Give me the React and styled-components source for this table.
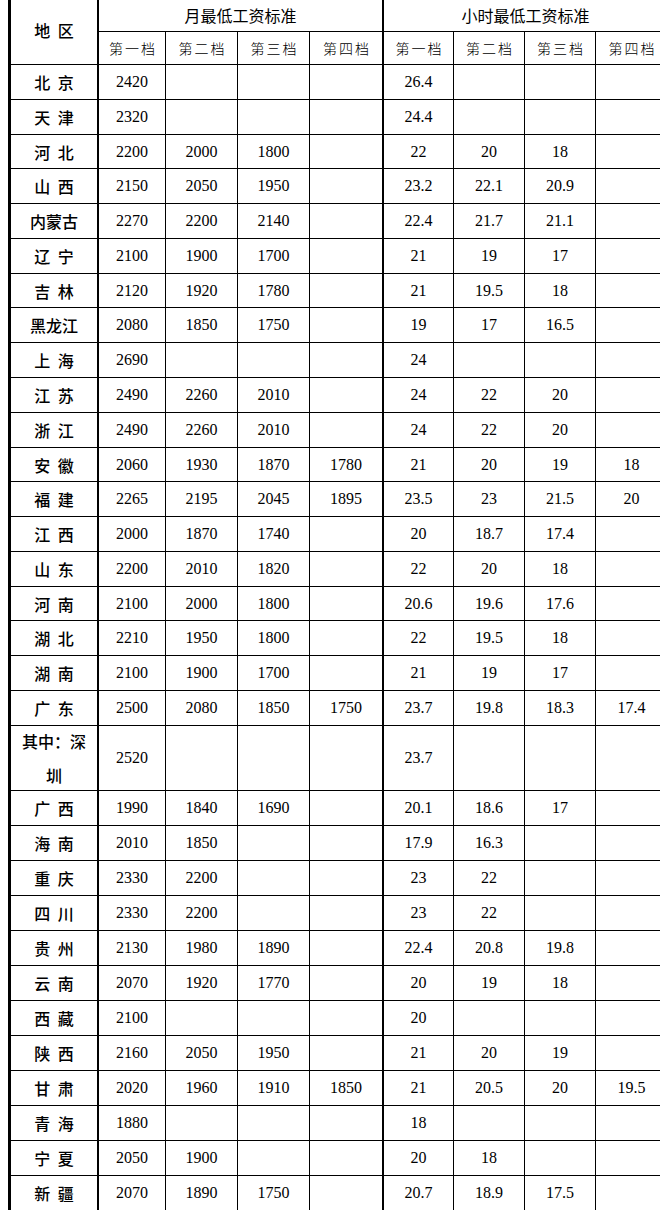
import React from 'react'
import styled, { createGlobalStyle } from 'styled-components'

const GlobalStyle = createGlobalStyle`
  html, body {
    margin: 0;
    padding: 0;
    background: #ffffff;
    overflow: hidden;
  }
  body {
    font-family: "Noto Sans CJK SC", "Noto Sans", sans-serif;
    color: #000;
  }
`

const Page = styled.div`
  width: 660px;
  height: 1210px;
  overflow: hidden;
  background: #fff;
`

const Sheet = styled.div`
  display: grid;
  grid-template-columns: 88px 67px 72px 72px 74px 70px 71px 71px 72px;
  margin-left: 8px;
  width: max-content;
  border-left: 3px solid #000;
`

const Cell = styled.div`
  box-sizing: border-box;
  display: flex;
  align-items: center;
  justify-content: center;
  text-align: center;
  border-right: ${(p) => (p.$thick ? '2px' : '1px')} solid #000;
  border-bottom: 1px solid #000;
  grid-column: ${(p) => p.$span || 'auto'};
  grid-row: ${(p) => p.$rows || 'auto'};
  white-space: pre;
`

const AreaCell = styled(Cell)`
  font-family: "Noto Sans CJK SC", sans-serif;
  font-size: 16px;
  font-weight: 500;
  line-height: 34px;
  word-spacing: 4px;
  flex-direction: column;
`

const GroupCell = styled(Cell)`
  font-family: "Noto Sans CJK SC", sans-serif;
  font-size: 16px;
  padding-bottom: 2px;
`

const TierCell = styled(Cell)`
  font-family: "Noto Sans CJK SC", sans-serif;
  font-size: 14px;
  font-weight: 300;
  letter-spacing: 2px;
  padding-left: 2px;
`

const NumCell = styled(Cell)`
  font-family: "Liberation Serif", "Times New Roman", serif;
  font-size: 16px;
`

const HeadLabel = styled.span`
  padding-bottom: 4px;
`

const tiers = ['第一档', '第二档', '第三档', '第四档']

const rows = [
  ['北 京', '2420', '', '', '', '26.4', '', '', ''],
  ['天 津', '2320', '', '', '', '24.4', '', '', ''],
  ['河 北', '2200', '2000', '1800', '', '22', '20', '18', ''],
  ['山 西', '2150', '2050', '1950', '', '23.2', '22.1', '20.9', ''],
  ['内蒙古', '2270', '2200', '2140', '', '22.4', '21.7', '21.1', ''],
  ['辽 宁', '2100', '1900', '1700', '', '21', '19', '17', ''],
  ['吉 林', '2120', '1920', '1780', '', '21', '19.5', '18', ''],
  ['黑龙江', '2080', '1850', '1750', '', '19', '17', '16.5', ''],
  ['上 海', '2690', '', '', '', '24', '', '', ''],
  ['江 苏', '2490', '2260', '2010', '', '24', '22', '20', ''],
  ['浙 江', '2490', '2260', '2010', '', '24', '22', '20', ''],
  ['安 徽', '2060', '1930', '1870', '1780', '21', '20', '19', '18'],
  ['福 建', '2265', '2195', '2045', '1895', '23.5', '23', '21.5', '20'],
  ['江 西', '2000', '1870', '1740', '', '20', '18.7', '17.4', ''],
  ['山 东', '2200', '2010', '1820', '', '22', '20', '18', ''],
  ['河 南', '2100', '2000', '1800', '', '20.6', '19.6', '17.6', ''],
  ['湖 北', '2210', '1950', '1800', '', '22', '19.5', '18', ''],
  ['湖 南', '2100', '1900', '1700', '', '21', '19', '17', ''],
  ['广 东', '2500', '2080', '1850', '1750', '23.7', '19.8', '18.3', '17.4'],
  [['其中：深', '圳'], '2520', '', '', '', '23.7', '', '', ''],
  ['广 西', '1990', '1840', '1690', '', '20.1', '18.6', '17', ''],
  ['海 南', '2010', '1850', '', '', '17.9', '16.3', '', ''],
  ['重 庆', '2330', '2200', '', '', '23', '22', '', ''],
  ['四 川', '2330', '2200', '', '', '23', '22', '', ''],
  ['贵 州', '2130', '1980', '1890', '', '22.4', '20.8', '19.8', ''],
  ['云 南', '2070', '1920', '1770', '', '20', '19', '18', ''],
  ['西 藏', '2100', '', '', '', '20', '', '', ''],
  ['陕 西', '2160', '2050', '1950', '', '21', '20', '19', ''],
  ['甘 肃', '2020', '1960', '1910', '1850', '21', '20.5', '20', '19.5'],
  ['青 海', '1880', '', '', '', '18', '', '', ''],
  ['宁 夏', '2050', '1900', '', '', '20', '18', '', ''],
  ['新 疆', '2070', '1890', '1750', '', '20.7', '18.9', '17.5', ''],
]

// row heights follow the grid lines of the scan
const rowHeights = (() => {
  const hs = [32, 33]
  let prev = 64
  rows.forEach((r, i) => {
    let line
    if (i < 18) line = Math.round(64 + 34.78 * (i + 1))
    else if (i === 18) line = 725
    else if (i === 19) line = 790
    else line = prev + 35
    hs.push(line - prev)
    prev = line
  })
  return hs.map((h) => h + 'px').join(' ')
})()

export default function App() {
  return (
    <Page>
      <GlobalStyle />
      <Sheet style={{ gridTemplateRows: rowHeights }}>
        <AreaCell $thick $rows="1 / span 2">
          <HeadLabel>地 区</HeadLabel>
        </AreaCell>
        <GroupCell $thick $span="2 / span 4">月最低工资标准</GroupCell>
        <GroupCell $span="6 / span 4">小时最低工资标准</GroupCell>
        {[0, 1].map((g) =>
          tiers.map((t, i) => (
            <TierCell key={g + '-' + t} $thick={g === 0 && i === 3}>
              {t}
            </TierCell>
          ))
        )}
        {rows.map((r, ri) => (
          <React.Fragment key={ri}>
            <AreaCell $thick>
              {Array.isArray(r[0]) ? r[0].map((l) => <span key={l}>{l}</span>) : r[0]}
            </AreaCell>
            {r.slice(1).map((v, ci) => (
              <NumCell key={ci} $thick={ci === 3}>
                {v}
              </NumCell>
            ))}
          </React.Fragment>
        ))}
      </Sheet>
    </Page>
  )
}
